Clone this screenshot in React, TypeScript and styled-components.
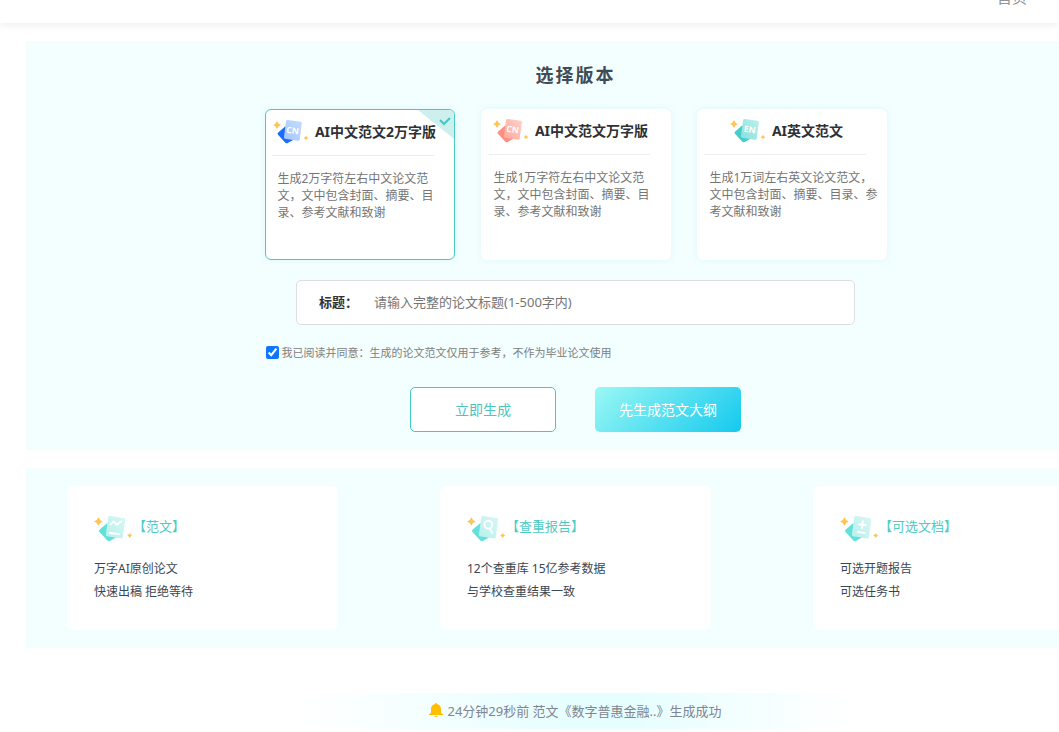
import React, { useState } from "react";
import styled, { createGlobalStyle } from "styled-components";

const GlobalStyle = createGlobalStyle`
  * { box-sizing: border-box; }
  html, body { margin: 0; overflow-x: hidden; }
  body {
    background: #fff;
    color: #303133;
    font-family: "Noto Sans", "Noto Sans CJK SC", sans-serif;
    font-size: 12px;
  }
  button, input { font: inherit; }
  h1, h2, h3, p { margin: 0; }
`;

const Page = styled.div`
  overflow: hidden;
  padding-bottom: 3px;
`;

const Header = styled.header`
  height: 50px;
  margin-top: -27px;
  padding-bottom: 2px;
  display: flex;
  align-items: center;
  justify-content: flex-end;
  box-shadow: 0 2px 8px rgba(0, 0, 0, 0.07);
`;

const NavLink = styled.a`
  color: #909399;
  font-size: 15px;
  line-height: 20px;
  text-decoration: none;
  margin-right: 30px;
`;

const NavDot = styled.span`
  width: 2px;
  height: 6px;
  background: #303133;
`;

const Main = styled.main`
  min-width: 1151px;
  padding: 18px 26px 0;
  display: flex;
  flex-direction: column;
  gap: 18px;
`;

const Panel = styled.section`
  background: #f3feff;
  padding: 18px 41px;
`;

const Generator = styled(Panel)`
  display: flex;
  flex-direction: column;
  align-items: center;
`;

const Heading = styled.h1`
  font-size: 18px;
  line-height: 32px;
  letter-spacing: 2px;
  color: #3f4c57;
`;

const Versions = styled.div`
  display: grid;
  grid-template-columns: repeat(3, 190px);
  gap: 26px;
  margin-top: 18px;
`;

const VersionCard = styled.button<{ $active: boolean }>`
  position: relative;
  display: flex;
  flex-direction: column;
  height: 151px;
  padding: ${(p) => (p.$active ? "6px" : "5px 6px")};
  overflow: hidden;
  text-align: left;
  background: #fff;
  border: 1px solid ${(p) => (p.$active ? "#4cc8c4" : "#fff")};
  border-radius: 6px;
  box-shadow: 0 0 6px rgba(76, 200, 196, 0.12);
  cursor: pointer;
`;

const VersionTitle = styled.span`
  display: flex;
  align-items: center;
  justify-content: center;
  gap: 6px;
  align-self: stretch;
  height: 30px;
  padding-right: 10px;
  font-size: 14px;
  font-weight: 700;
  white-space: nowrap;
  color: #303133;
`;

const Divider = styled.span`
  width: 162px;
  height: 1px;
  margin-top: 9px;
  background: #ebeef0;
`;

const VersionText = styled.span`
  padding: 14px 0 0 6px;
  font-size: 12px;
  line-height: 17px;
  color: #757575;
`;

const Corner = styled.svg`
  position: absolute;
  top: 0;
  right: 0;
`;

const TitleField = styled.label`
  display: flex;
  align-items: center;
  width: 559px;
  height: 45px;
  margin-top: 20px;
  padding: 0 22px 2px;
  gap: 16px;
  background: #fff;
  border: 1px solid #dcdfe0;
  border-radius: 5px;
  font-size: 13px;
  font-weight: 700;
`;

const TitleInput = styled.input`
  flex: 1;
  min-width: 0;
  padding: 0;
  border: 0;
  outline: 0;
  background: none;
  font-weight: 400;
  &::placeholder { color: #757575; }
`;

const Agreement = styled.label`
  display: flex;
  align-items: center;
  gap: 3px;
  width: 620px;
  height: 20px;
  margin-top: 17px;
  font-size: 11px;
  color: #808080;
`;

const Check = styled.input`
  width: 13px;
  height: 13px;
  margin: 0;
  accent-color: #0f74ff;
`;

const Actions = styled.div`
  display: flex;
  gap: 39px;
  margin-top: 25px;
`;

const Action = styled.button<{ $filled?: boolean }>`
  width: 146px;
  height: 45px;
  padding: 0 0 2px;
  border-radius: 5px;
  font-size: 14px;
  cursor: pointer;
  border: ${(p) => (p.$filled ? "0" : "1px solid #43c9c5")};
  color: ${(p) => (p.$filled ? "#fff" : "#4cc5c0")};
  background: ${(p) => (p.$filled ? "linear-gradient(135deg, #9bf8f4, #15c9ee)" : "#fff")};
`;

const Features = styled(Panel)`
  display: flex;
  justify-content: space-between;
`;

const Feature = styled.article`
  width: 271px;
  height: 144px;
  padding: 27px;
  background: #fff;
  border-radius: 6px;
`;

const FeatureTitle = styled.h2`
  display: flex;
  align-items: flex-end;
  height: 29px;
  font-size: 13px;
  line-height: 28px;
  font-weight: 400;
  color: #4fcbc6;
`;

const FeatureName = styled.span`
  padding-bottom: 2px;
`;

const FeatureText = styled.p`
  margin-top: 15px;
  font-size: 12px;
  line-height: 23px;
  color: #3a4652;
`;

const Notice = styled.div`
  display: flex;
  align-items: center;
  justify-content: center;
  align-self: center;
  gap: 4px;
  width: 550px;
  height: 36px;
  margin-top: 27px;
  padding-bottom: 2px;
  font-size: 13px;
  color: #808590;
  background: linear-gradient(90deg, #fff, #e6feff 50%, #e6feff 60%, #fff);
`;

type Tone = { back: string; from: string; to: string };
const tones: Record<string, Tone> = {
  blue: { back: "#1a6dff", from: "#a5c6ff", to: "#c3dcff" },
  red: { back: "#ff8f7f", from: "#ffa89b", to: "#ffd0c8" },
  teal: { back: "#45cdca", from: "#86e0dd", to: "#bdf0ee" },
  mint: { back: "#62e0da", from: "#b8f0ed", to: "#d8f7f5" },
};

const SheetsSvg = styled.svg`
  flex-shrink: 0;
`;

function SheetsIcon({ tone, width, height, children }: {
  tone: string; width: number; height: number; children: React.ReactNode;
}) {
  const t = tones[tone];
  const id = `sheet-${tone}`;
  return (
    <SheetsSvg width={width} height={height} viewBox="0 0 108 75" aria-hidden="true">
      <defs>
        <linearGradient id={id} x1="0" y1="1" x2="1" y2="0">
          <stop offset="0" stopColor={t.from} />
          <stop offset="1" stopColor={t.to} />
        </linearGradient>
      </defs>
      <path d="M12 6Q15 15 24 18Q15 21 12 30Q9 21 0 18Q9 15 12 6Z" fill="#ffc455" />
      <path d="M99 50Q101 55 106 57Q101 59 99 64Q97 59 92 57Q97 55 99 50Z" fill="#ffc455" />
      <path d="M15 41L37 22L62 62L44 72Q40 74 37 71L15 47Q12 44 15 41Z" fill={t.back} />
      <path d="M44 3L83 8Q87 9 86.500 13L80 62Q79 66 75 65L36 59Q32 58 33 54L39 7Q40 3 44 3Z" fill={`url(#${id})`} />
      {children}
    </SheetsSvg>
  );
}

function SheetLabel({ children }: { children: string }) {
  return (
    <text x="59" y="44" transform="rotate(7 60 35)" textAnchor="middle" fontSize="26" fontWeight="700" fill="#fff">
      {children}
    </text>
  );
}

const versions = [
  { title: "AI中文范文2万字版", tone: "blue", label: "CN", text: "生成2万字符左右中文论文范文，文中包含封面、摘要、目录、参考文献和致谢" },
  { title: "AI中文范文万字版", tone: "red", label: "CN", text: "生成1万字符左右中文论文范文，文中包含封面、摘要、目录、参考文献和致谢" },
  { title: "AI英文范文", tone: "teal", label: "EN", text: "生成1万词左右英文论文范文，文中包含封面、摘要、目录、参考文献和致谢" },
];

const stroke = { fill: "none", stroke: "#fff", strokeWidth: 5, strokeLinecap: "round" as const };

const features = [
  {
    title: "【范文】",
    lines: ["万字AI原创论文", "快速出稿 拒绝等待"],
    glyph: <path {...stroke} d="M46 26L54 18L63 27L76 17M44 50L70 53" />,
  },
  {
    title: "【查重报告】",
    lines: ["12个查重库 15亿参考数据", "与学校查重结果一致"],
    glyph: <g {...stroke}><circle cx="59" cy="27" r="11" /><path d="M64 38L70 50" /></g>,
  },
  {
    title: "【可选文档】",
    lines: ["可选开题报告", "可选任务书"],
    glyph: <path {...stroke} d="M52 26L72 28M63 17L61 37M49 47L69 50" />,
  },
];

export default function App() {
  const [selected, setSelected] = useState(0);
  const [agreed, setAgreed] = useState(true);
  return (
    <Page>
      <GlobalStyle />
      <Header>
        <NavLink href="#">首页</NavLink>
        <NavDot />
      </Header>
      <Main>
        <Generator>
          <Heading>选择版本</Heading>
          <Versions>
            {versions.map((v, i) => (
              <VersionCard key={v.title} type="button" $active={i === selected} onClick={() => setSelected(i)}>
                <VersionTitle>
                  <SheetsIcon tone={v.tone} width={36} height={25}>
                    <SheetLabel>{v.label}</SheetLabel>
                  </SheetsIcon>
                  {v.title}
                </VersionTitle>
                <Divider />
                <VersionText>{v.text}</VersionText>
                {i === selected && (
                  <Corner width="36" height="29" viewBox="0 0 36 29" aria-hidden="true">
                    <path d="M0 0H36V29Z" fill="#cdf0ef" />
                    <path d="M22 10L26 14L32 8" fill="none" stroke="#43c9c5" strokeWidth="2" />
                  </Corner>
                )}
              </VersionCard>
            ))}
          </Versions>
          <TitleField>
            标题：
            <TitleInput type="text" maxLength={500} placeholder="请输入完整的论文标题(1-500字内)" />
          </TitleField>
          <Agreement>
            <Check type="checkbox" checked={agreed} onChange={(e) => setAgreed(e.target.checked)} />
            我已阅读并同意：生成的论文范文仅用于参考，不作为毕业论文使用
          </Agreement>
          <Actions>
            <Action type="button">立即生成</Action>
            <Action type="button" $filled>先生成范文大纲</Action>
          </Actions>
        </Generator>
        <Features>
          {features.map((f) => (
            <Feature key={f.title}>
              <FeatureTitle>
                <SheetsIcon tone="mint" width={39} height={27}>{f.glyph}</SheetsIcon>
                <FeatureName>{f.title}</FeatureName>
              </FeatureTitle>
              <FeatureText>
                {f.lines[0]}
                <br />
                {f.lines[1]}
              </FeatureText>
            </Feature>
          ))}
        </Features>
        <Notice>
          <svg width="14" height="14" viewBox="0 0 14 14" aria-hidden="true">
            <path d="M7 0Q8 0 8 1Q12 2 12 6V10L14 11V12H0V11L2 10V6Q2 2 6 1Q6 0 7 0ZM5 13H9Q8 14 7 14Q6 14 5 13Z" fill="#ffbf00" />
          </svg>
          24分钟29秒前 范文《数字普惠金融..》生成成功
        </Notice>
      </Main>
    </Page>
  );
}
